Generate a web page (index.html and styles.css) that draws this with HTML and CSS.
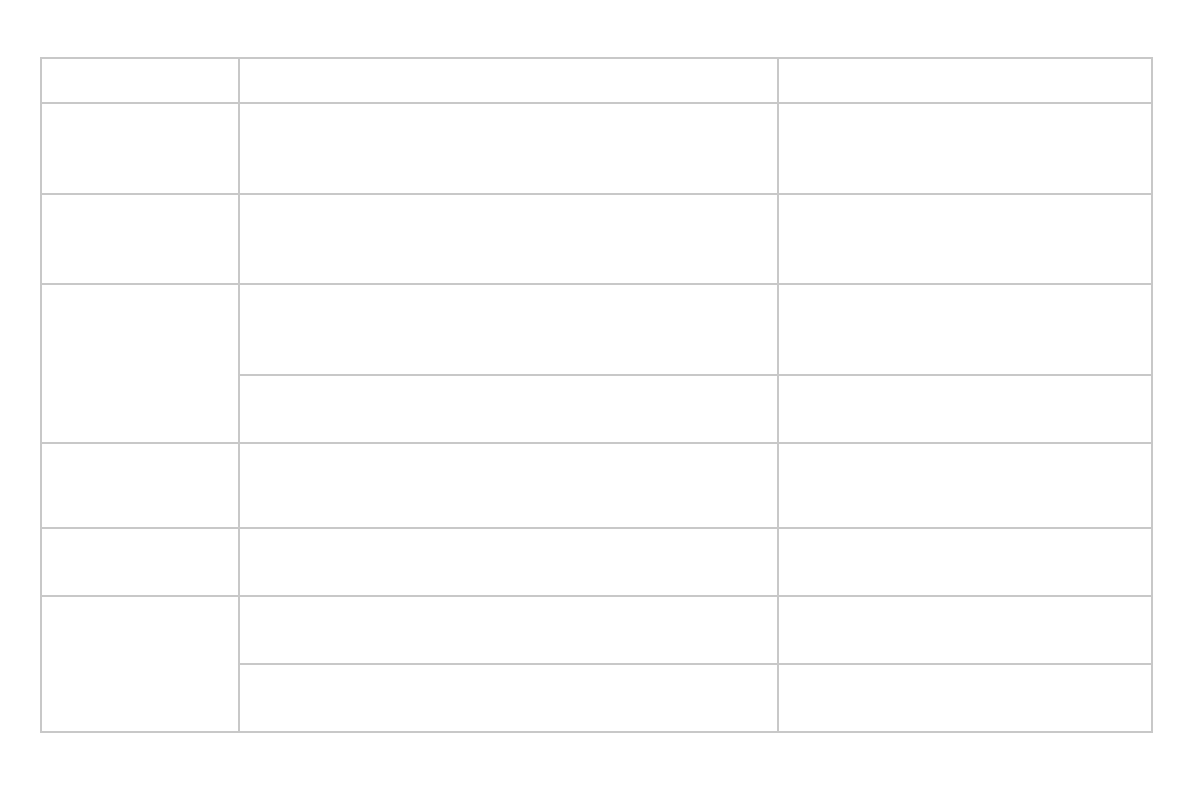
FILE: index.html
```html
<!DOCTYPE html>
<html>
<head>
<meta charset="utf-8">
<link rel="stylesheet" href="styles.css">
</head>
<body>
<div class="page">
<table class="grid">
  <colgroup>
    <col class="c1"><col class="c2"><col class="c3">
  </colgroup>
  <tr class="h45"><td></td><td></td><td></td></tr>
  <tr class="h91"><td></td><td></td><td></td></tr>
  <tr class="h90"><td></td><td></td><td></td></tr>
  <tr class="h91"><td rowspan="2"></td><td></td><td></td></tr>
  <tr class="h68"><td></td><td></td></tr>
  <tr class="h85"><td></td><td></td><td></td></tr>
  <tr class="h68"><td></td><td></td><td></td></tr>
  <tr class="h68"><td rowspan="2"></td><td></td><td></td></tr>
  <tr class="h68"><td></td><td></td></tr>
</table>
</div>
</body>
</html>
```

FILE: styles.css
```css
html, body {
  margin: 0;
  padding: 0;
  background: #ffffff;
  font-family: "Liberation Sans", Arial, sans-serif;
}
.page {
  padding: 57px 0 0 40px;
}
.grid {
  border-collapse: collapse;
  table-layout: fixed;
  width: 1113px;
}
.grid td {
  border: 2px solid #c8c8c8;
  padding: 0;
}
.c1 { width: 198px; }
.c2 { width: 539px; }
.c3 { width: 374px; }
.h45 { height: 45px; }
.h91 { height: 91px; }
.h90 { height: 90px; }
.h68 { height: 68px; }
.h85 { height: 85px; }
```
